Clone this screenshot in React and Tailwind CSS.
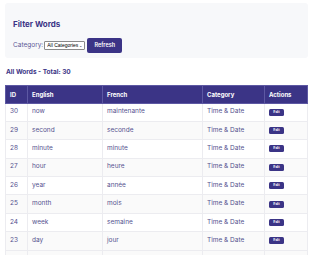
import React from "react";

const rows = [
  [30, "now", "maintenante"],
  [29, "second", "seconde"],
  [28, "minute", "minute"],
  [27, "hour", "heure"],
  [26, "year", "année"],
  [25, "month", "mois"],
  [24, "week", "semaine"],
  [23, "day", "jour"],
];

export default function App() {
  return (
    <div className="w-[315px] h-[255px] overflow-hidden bg-white text-[#55528f]" style={{ fontFamily: "Inter, 'Liberation Sans', sans-serif" }}>
      <div className="ml-[5px] mt-[3px] w-[303px] h-[55px] bg-[#f7f8fa] rounded-[3px] pl-[8px] pt-[16px]">
        <div className="text-[8px] leading-[10px] font-bold text-[#3b3486]">Filter Words</div>
        <div className="flex items-center mt-[9px]">
          <span className="text-[6.5px] text-[#5b5897]">Category:</span>
          <div className="ml-[1px] w-[41px] h-[9px] border border-[#8a8a8a] bg-white rounded-[1px] flex items-center px-[2px] text-[5px] text-black" style={{ fontFamily: "'Liberation Sans', sans-serif" }}>
            <span className="flex-1 whitespace-nowrap overflow-hidden">All Categories</span>
            <span className="text-[4px]">⌄</span>
          </div>
          <div className="ml-[2px] w-[35px] h-[15px] bg-[#3b3486] rounded-[2px] text-white text-[5.5px] flex items-center justify-center font-semibold">Refresh</div>
        </div>
      </div>
      <div className="ml-[6px] mt-[10px] text-[6.5px] leading-[8px] font-bold text-[#3b3486]">All Words - Total: 30</div>
      <table className="ml-[5px] mt-[9px] border-collapse text-[6.5px]" style={{ tableLayout: "fixed", width: "302px" }}>
        <colgroup>
          <col style={{ width: "22px" }} />
          <col style={{ width: "75px" }} />
          <col style={{ width: "100px" }} />
          <col style={{ width: "62px" }} />
          <col style={{ width: "43px" }} />
        </colgroup>
        <thead>
          <tr className="bg-[#3b3486] text-white h-[17.5px]">
            {["ID", "English", "French", "Category", "Actions"].map((h) => (
              <th key={h} className="text-left font-bold px-[4px] border border-[#5d58a3] text-[6px]">{h}</th>
            ))}
          </tr>
        </thead>
        <tbody>
          {rows.map((r, i) => (
            <tr key={r[0]} className={(i % 2 === 1 ? "bg-[#fafafa] " : "bg-white ") + "h-[18.4px]"}>
              <td className="px-[4px] border border-[#ececf0]">{r[0]}</td>
              <td className="px-[4px] border border-[#ececf0]">{r[1]}</td>
              <td className="px-[4px] border border-[#ececf0]">{r[2]}</td>
              <td className="px-[4px] border border-[#ececf0]">Time &amp; Date</td>
              <td className="px-[4px] border border-[#ececf0]">
                <div className="w-[15px] h-[7px] bg-[#3b3486] rounded-[1.5px] text-white text-[3.5px] flex items-center justify-center font-semibold">Edit</div>
              </td>
            </tr>
          ))}
          <tr className="bg-[#fafafa] h-[18.4px]">
            <td className="border border-[#ececf0]"></td>
            <td className="border border-[#ececf0]"></td>
            <td className="border border-[#ececf0]"></td>
            <td className="border border-[#ececf0]"></td>
            <td className="border border-[#ececf0]"></td>
          </tr>
        </tbody>
      </table>
    </div>
  );
}
